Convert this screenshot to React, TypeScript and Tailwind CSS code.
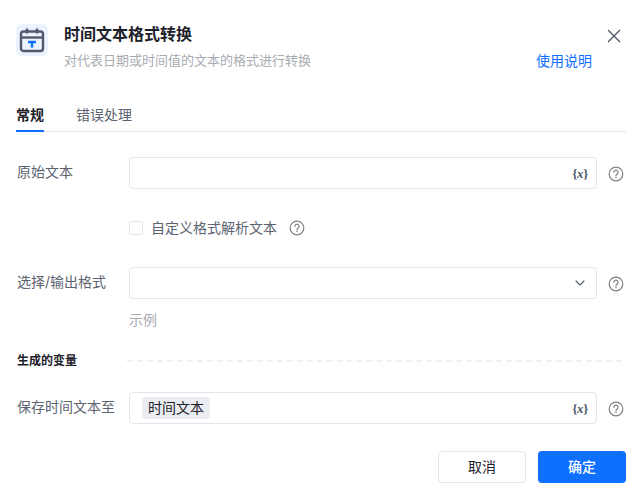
import { X, ChevronDown } from 'lucide-react'

const font = { fontFamily: '"Inter", "Noto Sans CJK SC", sans-serif' }

function Help() {
  return (
    <svg width="16" height="16" viewBox="0 0 16 16" fill="none" stroke="#7d7f84" strokeWidth="1.2" className="shrink-0">
      <circle cx="8" cy="8" r="6.8" />
      <path d="M5.9 6.3a2.1 2.1 0 1 1 3.3 1.7c-.7.5-1.2.9-1.2 1.8" strokeLinecap="round" />
      <circle cx="8" cy="11.6" r=".75" fill="#7d7f84" stroke="none" />
    </svg>
  )
}

function VarMark() {
  return (
    <span className="text-[13px] font-bold leading-none tracking-[-0.3px] text-[#4e5969]" style={{ fontFamily: '"Liberation Serif", serif' }}>
      {'{'}
      <i>x</i>
      {'}'}
    </span>
  )
}

function Field({ label, children, right, className = '' }: { label: string; children?: React.ReactNode; right: React.ReactNode; className?: string }) {
  return (
    <div className={`flex items-start ${className}`}>
      <div className="w-[113px] shrink-0 pl-px pt-[5px] text-sm leading-[20px] text-[#5c6370]">{label}</div>
      <div className="flex h-8 w-[468px] items-center justify-between rounded-[4px] border border-[#e5e6eb] bg-white pl-3 pr-2">
        <div>{children}</div>
        {right}
      </div>
      <div className="ml-[11px] pt-[9px]">
        <Help />
      </div>
    </div>
  )
}

export default function App() {
  return (
    <div className="relative flex h-[501px] w-[640px] flex-col overflow-hidden bg-white pl-4 pr-[14px]" style={font}>
      <button className="absolute right-[15px] top-[25px] text-[#4e5969]">
        <X size={22} strokeWidth={1.5} />
      </button>

      <div className="flex items-start pt-6">
        <div className="flex h-8 w-8 shrink-0 items-center justify-center rounded-[5px] bg-[#edf3fe]">
          <svg width="26" height="26" viewBox="0 0 26 26" fill="none">
            <rect x="2" y="4.5" width="22" height="19.5" rx="2.5" stroke="#4f5a70" strokeWidth="2.4" />
            <path d="M2 10.5h22" stroke="#4f5a70" strokeWidth="2.4" />
            <path d="M8 1.5v5M18 1.5v5" stroke="#4f5a70" strokeWidth="2.4" />
            <path d="M9 15h8M13 15v5.5" stroke="#0f6fff" strokeWidth="2.4" />
          </svg>
        </div>
        <div className="ml-4 flex-1">
          <div className="-mt-[1px] text-base font-semibold leading-[22px] text-[#1d2129]">时间文本格式转换</div>
          <div className="mt-[5px] flex items-start justify-between">
            <span className="text-[13px] leading-[20px] text-[#a8abb2]">对代表日期或时间值的文本的格式进行转换</span>
            <a className="mr-[34px] mt-[1px] text-sm leading-[20px] text-[#0f6fff]">使用说明</a>
          </div>
        </div>
      </div>

      <div className="mt-[34px] flex gap-8 border-b border-[#e5e6eb] text-[14px]">
        <div className="-mb-px border-b-2 border-[#0f6fff] pb-[5px] font-semibold leading-[20px] text-[#1d2129]">常规</div>
        <div className="leading-[20px] text-[#5c6370]">错误处理</div>
      </div>

      <Field label="原始文本" right={<VarMark />} className="mt-[25px]" />

      <div className="mt-[29px] flex items-center pl-[113px]">
        <span className="h-[14px] w-[14px] rounded-[2px] border border-[#e5e6eb]" />
        <span className="ml-2 text-sm leading-[20px] text-[#5c6370]">自定义格式解析文本</span>
        <span className="ml-[12px]"><Help /></span>
      </div>

      <Field label="选择/输出格式" right={<ChevronDown size={16} strokeWidth={1.6} className="text-[#4e5969]" />} className="mt-[29px]" />

      <div className="mt-[11px] pl-[113px] text-sm leading-[20px] text-[#a8abb2]">示例</div>

      <div className="mt-[21px] flex items-center">
        <span className="w-[111px] pl-px text-xs font-semibold leading-[20px] text-[#1d2129]">生成的变量</span>
        <div className="w-[495px] border-t-2 border-dashed border-[#eff0f2]" />
      </div>

      <Field
        label="保存时间文本至"
        right={<VarMark />}
        className="mt-[21px]"
      >
        <span className="block rounded-[3px] bg-[#e9ecf0] px-[6px] text-sm leading-[22px] text-[#1d2129]">时间文本</span>
      </Field>

      <div className="mt-[27px] flex justify-end gap-3 text-sm">
        <button className="h-8 w-[88px] rounded-[4px] border border-[#e5e6eb] bg-white text-[#1d2129]">取消</button>
        <button className="h-8 w-[88px] rounded-[4px] bg-[#0f6fff] font-medium text-white">确定</button>
      </div>
    </div>
  )
}
